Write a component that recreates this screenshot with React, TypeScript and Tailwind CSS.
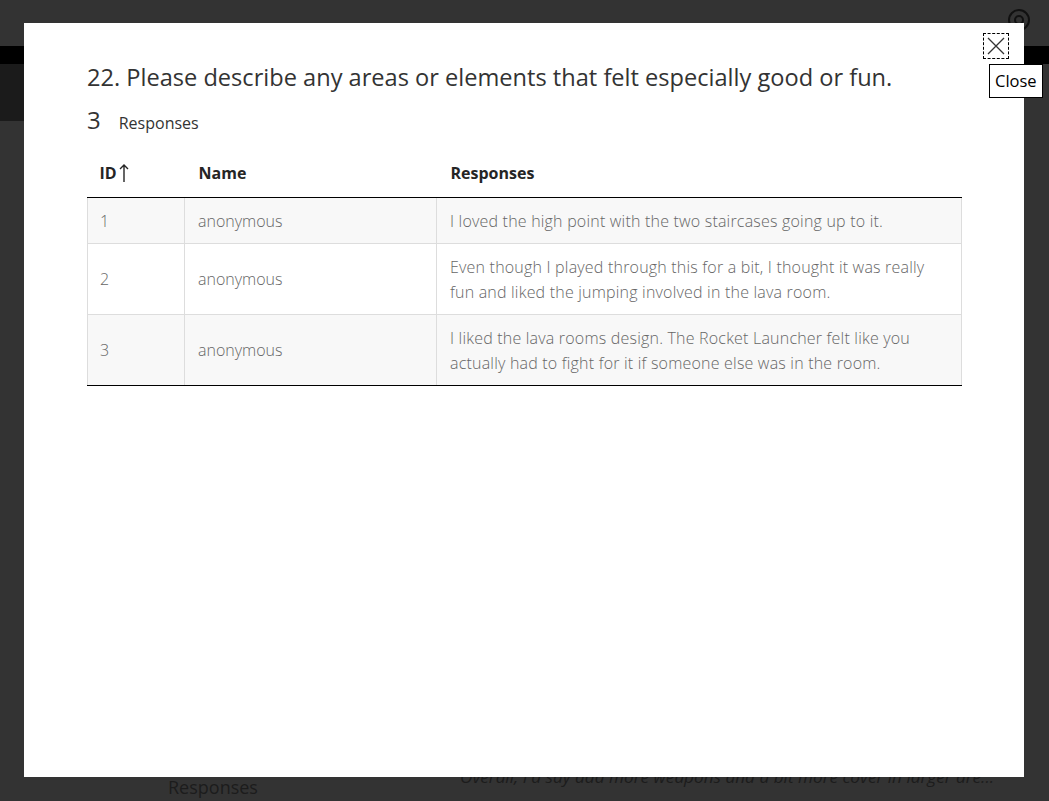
import React from 'react';

type Row = { id: number; name: string; text: string };

const rows: Row[] = [
  { id: 1, name: 'anonymous', text: 'I loved the high point with the two staircases going up to it.' },
  {
    id: 2,
    name: 'anonymous',
    text: 'Even though I played through this for a bit, I thought it was really fun and liked the jumping involved in the lava room.',
  },
  {
    id: 3,
    name: 'anonymous',
    text: 'I liked the lava rooms design. The Rocket Launcher felt like you actually had to fight for it if someone else was in the room.',
  },
];

const font = { fontFamily: '"Open Sans", "Noto Sans", sans-serif' };

function Backdrop() {
  return (
    <div className="absolute inset-0">
      <div className="h-[46px]" />
      <div className="h-[18px] bg-black" />
      <div className="h-[57px] w-[1024px] bg-[#1b1b1b]" />
      <svg className="absolute left-[1006px] top-[6px]" width="26" height="26" viewBox="0 0 26 26" fill="none">
        <circle cx="13" cy="14" r="10" stroke="#111" strokeWidth="2" />
        <circle cx="13" cy="14" r="4" stroke="#111" strokeWidth="2" />
      </svg>
      <div className="absolute left-[168px] top-[774px] text-[18px] text-[#1c1c1c]">Responses</div>
      <div className="absolute left-[460px] top-[764px] text-[17.2px] italic text-[#1c1c1c] whitespace-nowrap">
        Overall, I'd say add more weapons and a bit more cover in larger are...
      </div>
    </div>
  );
}

const cell = 'border-x border-t border-[#dddddd] pt-[11px] pb-[9px] align-middle font-light leading-[25px] text-[#666]';

export default function App() {
  return (
    <div className="relative h-[801px] w-full overflow-hidden bg-[#333333]" style={font}>
      <Backdrop />
      <div className="absolute left-[24px] top-[23px] h-[754px] w-[1000px] bg-white">
        <div className="flex justify-end pr-[15px] pt-[10px]">
          <button className="flex h-[26px] w-[26px] items-center justify-center border border-dashed border-black">
            <svg width="20" height="20" viewBox="0 0 20 20" fill="none">
              <path d="M2 2 L18 18 M18 2 L2 18" stroke="#333" strokeWidth="1.3" />
            </svg>
          </button>
        </div>
        <div className="px-[63px]">
          <h2 className="mt-[2px] text-[23.6px] leading-[32px] text-[#333]">
            22. Please describe any areas or elements that felt especially good or fun.
          </h2>
          <div className="mt-[13px] flex items-baseline gap-[18px] text-[#333]">
            <span className="text-[24px] leading-[28px]">3</span>
            <span className="text-[16px]">Responses</span>
          </div>
          <table className="mt-[15px] w-[875px] table-fixed border-collapse text-[16px]">
            <colgroup>
              <col className="w-[97px]" />
              <col className="w-[252px]" />
              <col />
            </colgroup>
            <thead>
              <tr className="h-[47px] text-left text-[#252525]">
                <th className="border-b border-black px-[12px] font-bold">
                  <span className="inline-flex items-center">
                    ID
                    <svg className="ml-[2px]" width="10" height="20" viewBox="0 0 10 20" fill="none">
                      <path d="M5 2 V19 M1 6 L5 2 L9 6" stroke="#252525" strokeWidth="1.4" />
                    </svg>
                  </span>
                </th>
                <th className="border-b border-black px-[14px] font-bold">Name</th>
                <th className="border-b border-black px-[14px] font-bold">Responses</th>
              </tr>
            </thead>
            <tbody>
              {rows.map((r, i) => {
                const last = i === rows.length - 1 ? 'border-b border-b-black' : '';
                return (
                  <tr key={r.id} className={i % 2 === 0 ? 'bg-[#f8f8f8]' : 'bg-white'}>
                    <td className={`${cell} ${last} px-[12px]`}>{r.id}</td>
                    <td className={`${cell} ${last} px-[13px]`}>{r.name}</td>
                    <td className={`${cell} ${last} px-[13px] tracking-[0.2px]`}>{r.text}</td>
                  </tr>
                );
              })}
            </tbody>
          </table>
        </div>
      </div>
      <div className="absolute left-[989px] top-[64px] border border-black bg-white px-[5px] py-[5px] text-[16.5px] leading-[22px] text-black">
        Close
      </div>
    </div>
  );
}
